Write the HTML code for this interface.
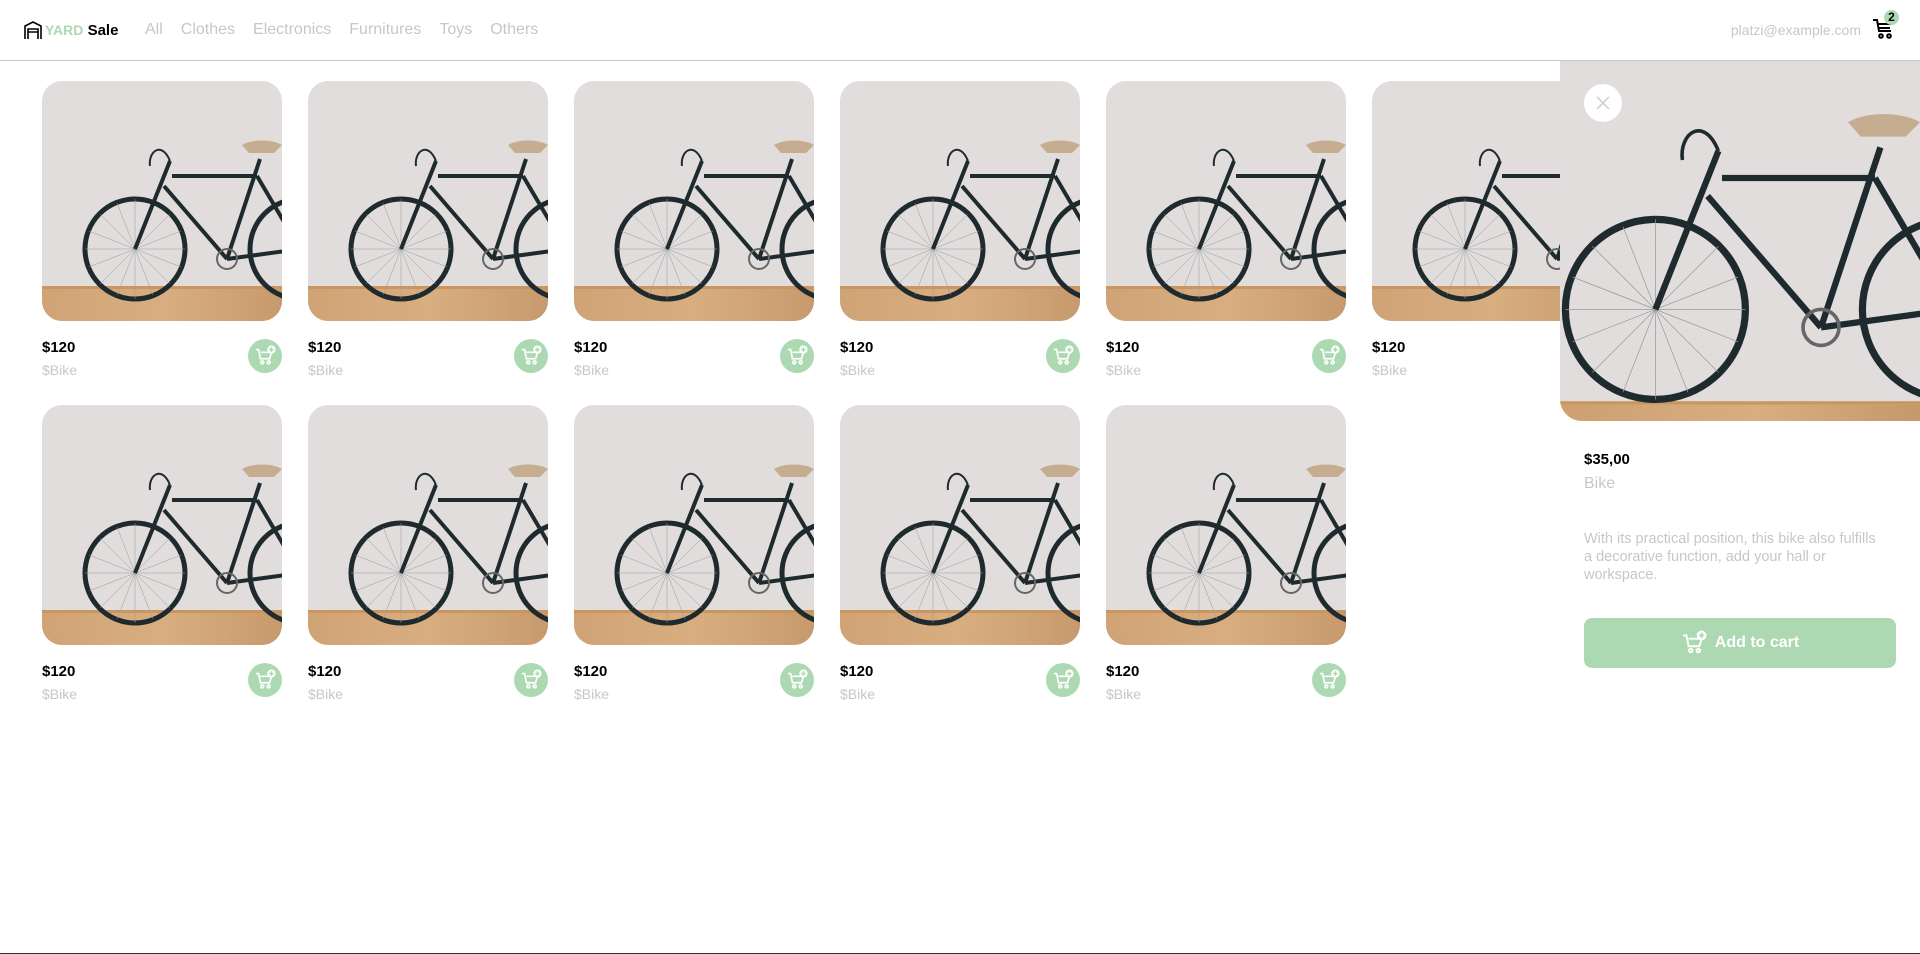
<!DOCTYPE html>
<html><head><meta charset="utf-8"><style>
*{box-sizing:border-box;margin:0;padding:0}
body{width:1920px;height:954px;overflow:hidden;background:#fff;font-family:"Liberation Sans",sans-serif;position:relative}
header{height:61px;border-bottom:1px solid #c8c8c8;position:relative}
.logo{position:absolute;left:23px;top:20px;display:flex;align-items:center;font-weight:bold;font-size:15px}
.nav{position:absolute;left:145px;top:21px;font-size:16px;color:#c7c7c7}
.nav span{margin-right:18px}
.email{position:absolute;right:59px;top:22px;color:#c7c7c7;font-size:14px}
.card{position:absolute;width:240px}
.img{width:240px;height:240px;border-radius:20px;overflow:hidden}
.price{position:absolute;top:258px;left:0;font-weight:bold;font-size:15px}
.name{position:absolute;top:281px;left:0;font-size:14px;color:#c7c7c7}
.btn{position:absolute;right:0;top:258px;width:34px;height:34px;border-radius:50%;background:#acd9b2;display:flex;align-items:center;justify-content:center}
.panel{position:absolute;left:1560px;top:61px;width:360px;height:893px;background:#fff}
.pimg{width:360px;height:360px;border-radius:0 0 0 22px;overflow:hidden;background:#e0dddc}
.close{position:absolute;left:1584px;top:84px;width:38px;height:38px;border-radius:50%;background:#fff;display:flex;align-items:center;justify-content:center}
.add{position:absolute;left:1584px;top:618px;width:312px;height:50px;border-radius:8px;background:#acd9b2;color:#fff;font-weight:bold;font-size:16px;display:flex;align-items:center;justify-content:center;gap:8px}
.bottom{position:absolute;left:0;bottom:0;width:1920px;height:1px;background:#333}
</style></head><body>
<svg width="0" height="0" style="position:absolute">
<defs>
<linearGradient id="floor" x1="0" x2="1"><stop offset="0" stop-color="#c99a6c"/><stop offset=".5" stop-color="#d8ae80"/><stop offset="1" stop-color="#b98a5e"/></linearGradient>
<symbol id="bike" viewBox="0 0 240 240" overflow="hidden">
<rect x="-100" y="-100" width="440" height="440" fill="#e0dddc"/>
<rect x="-100" y="207" width="440" height="133" fill="url(#floor)"/>
<rect x="-100" y="205" width="440" height="3" fill="#c9965f"/>
<g fill="none" stroke="#1f2a2e">
<circle cx="93" cy="168" r="50" stroke-width="5"/>
<circle cx="258" cy="168" r="50" stroke-width="5"/>
<g stroke="#9a9a9a" stroke-width=".5"><path d="M93 118V218M43 168H143M58 133l70 70M128 133l-70 70M75 122l36 92M111 122l-36 92M47 150l92 36M47 186l92-36"/></g>
<path d="M128 80 93 168M130 95H215M122 105 185 178M218 78 185 178M185 178 258 168M215 95 258 168" stroke-width="4"/>
<circle cx="185" cy="178" r="10" stroke-width="2" stroke="#666"/>
<path d="M128 80c-8-20-22-10-20 5" stroke-width="2"/>
</g>
<path d="M200 64c10-6 30-6 40 0l-8 8h-25z" fill="#c6ad8f"/>
</symbol>
<symbol id="cartp" viewBox="0 0 24 24"><g fill="none" stroke="#fff" stroke-width="1.8"><path d="M2 5h3l2 10h10l2-7H7"/><circle cx="9" cy="19" r="1.6"/><circle cx="16" cy="19" r="1.6"/></g><circle cx="19" cy="5" r="4.5" fill="#fff"/><path d="M19 2.5v5M16.5 5h5" stroke="#acd9b2" stroke-width="1.6"/></symbol>
</defs></svg>
<header>
<div class="logo"><svg width="20" height="20" viewBox="0 0 20 20"><path d="M2 19V6L10 2l8 4v13M5 19V9h10v10M5 12h10" fill="none" stroke="#000" stroke-width="1.6"/></svg><span style="color:#acd9b2;margin-left:2px;font-size:14px">YARD</span>&nbsp;<span>Sale</span></div>
<div class="nav"><span>All</span><span>Clothes</span><span>Electronics</span><span>Furnitures</span><span>Toys</span><span>Others</span></div>
<div class="email">platzi@example.com</div>
<svg style="position:absolute;left:1872px;top:16px" width="24" height="24" viewBox="0 0 24 24"><g fill="none" stroke="#000" stroke-width="2"><path d="M1 4h4l2 11h12"/><path d="M6 8h14M7 12h11"/><circle cx="9" cy="20" r="1.8"/><circle cx="17" cy="20" r="1.8"/></g></svg>
<div style="position:absolute;left:1884px;top:10px;width:15px;height:15px;border-radius:50%;background:#acd9b2;font-size:12px;font-weight:bold;text-align:center;line-height:15px">2</div>
</header>

<div class="card" style="left:42px;top:81px"><div class="img"><svg width="240" height="240"><use href="#bike"/></svg></div><div class="price">$120</div><div class="name">$Bike</div><div class="btn"><svg width="22" height="22"><use href="#cartp"/></svg></div></div>
<div class="card" style="left:308px;top:81px"><div class="img"><svg width="240" height="240"><use href="#bike"/></svg></div><div class="price">$120</div><div class="name">$Bike</div><div class="btn"><svg width="22" height="22"><use href="#cartp"/></svg></div></div>
<div class="card" style="left:574px;top:81px"><div class="img"><svg width="240" height="240"><use href="#bike"/></svg></div><div class="price">$120</div><div class="name">$Bike</div><div class="btn"><svg width="22" height="22"><use href="#cartp"/></svg></div></div>
<div class="card" style="left:840px;top:81px"><div class="img"><svg width="240" height="240"><use href="#bike"/></svg></div><div class="price">$120</div><div class="name">$Bike</div><div class="btn"><svg width="22" height="22"><use href="#cartp"/></svg></div></div>
<div class="card" style="left:1106px;top:81px"><div class="img"><svg width="240" height="240"><use href="#bike"/></svg></div><div class="price">$120</div><div class="name">$Bike</div><div class="btn"><svg width="22" height="22"><use href="#cartp"/></svg></div></div>
<div class="card" style="left:1372px;top:81px"><div class="img"><svg width="240" height="240"><use href="#bike"/></svg></div><div class="price">$120</div><div class="name">$Bike</div><div class="btn"><svg width="22" height="22"><use href="#cartp"/></svg></div></div>

<div class="card" style="left:42px;top:405px"><div class="img"><svg width="240" height="240"><use href="#bike"/></svg></div><div class="price">$120</div><div class="name">$Bike</div><div class="btn"><svg width="22" height="22"><use href="#cartp"/></svg></div></div>
<div class="card" style="left:308px;top:405px"><div class="img"><svg width="240" height="240"><use href="#bike"/></svg></div><div class="price">$120</div><div class="name">$Bike</div><div class="btn"><svg width="22" height="22"><use href="#cartp"/></svg></div></div>
<div class="card" style="left:574px;top:405px"><div class="img"><svg width="240" height="240"><use href="#bike"/></svg></div><div class="price">$120</div><div class="name">$Bike</div><div class="btn"><svg width="22" height="22"><use href="#cartp"/></svg></div></div>
<div class="card" style="left:840px;top:405px"><div class="img"><svg width="240" height="240"><use href="#bike"/></svg></div><div class="price">$120</div><div class="name">$Bike</div><div class="btn"><svg width="22" height="22"><use href="#cartp"/></svg></div></div>
<div class="card" style="left:1106px;top:405px"><div class="img"><svg width="240" height="240"><use href="#bike"/></svg></div><div class="price">$120</div><div class="name">$Bike</div><div class="btn"><svg width="22" height="22"><use href="#cartp"/></svg></div></div>

<div class="panel">
<div class="pimg"><svg width="360" height="360" viewBox="40 30 200 200"><g><rect x="0" y="0" width="300" height="300" fill="#e0dddc"/><rect x="0" y="221" width="300" height="40" fill="url(#floor)"/><rect x="0" y="219" width="300" height="2" fill="#c9965f"/>
<g fill="none" stroke="#1f2a2e">
<circle cx="93" cy="168" r="50" stroke-width="4"/>
<circle cx="258" cy="168" r="50" stroke-width="4"/>
<g stroke="#9a9a9a" stroke-width=".4"><path d="M93 118V218M43 168H143M58 133l70 70M128 133l-70 70M75 122l36 92M111 122l-36 92M47 150l92 36M47 186l92-36"/></g>
<path d="M128 80 93 168M130 95H215M122 105 185 178M218 78 185 178M185 178 258 168M215 95 258 168" stroke-width="3.5"/>
<circle cx="185" cy="178" r="10" stroke-width="2" stroke="#666"/>
<path d="M128 80c-8-20-22-10-20 5" stroke-width="2"/>
</g>
<path d="M200 64c10-6 30-6 40 0l-8 8h-25z" fill="#c6ad8f"/></g></svg></div>
<div style="position:absolute;left:24px;top:390px;font-weight:bold;font-size:15px">$35,00</div>
<div style="position:absolute;left:24px;top:414px;font-size:16px;color:#c7c7c7">Bike</div>
<div style="position:absolute;left:24px;top:469px;width:300px;font-size:14.5px;line-height:18px;color:#c7c7c7">With its practical position, this bike also fulfills a decorative function, add your hall or workspace.</div>
</div>
<div class="close"><svg width="16" height="16"><path d="M2 2l12 12M14 2 2 14" stroke="#ccc" stroke-width="1.5"/></svg></div>
<div class="add"><svg width="26" height="26"><use href="#cartp"/></svg>Add to cart</div>
<div class="bottom"></div>
</body></html>
